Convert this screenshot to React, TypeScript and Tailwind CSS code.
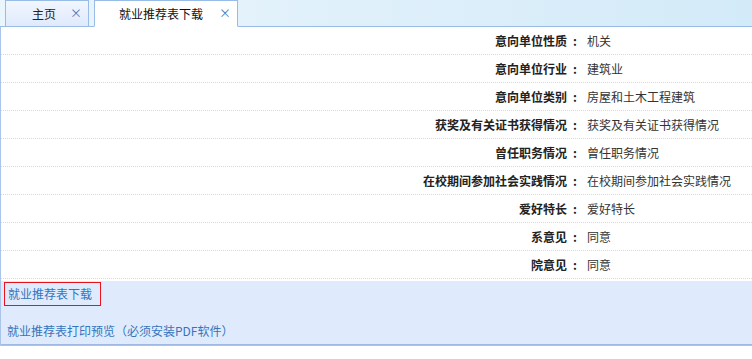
import React from 'react';

const rows: [string, string][] = [
  ['意向单位性质', '机关'],
  ['意向单位行业', '建筑业'],
  ['意向单位类别', '房屋和土木工程建筑'],
  ['获奖及有关证书获得情况', '获奖及有关证书获得情况'],
  ['曾任职务情况', '曾任职务情况'],
  ['在校期间参加社会实践情况', '在校期间参加社会实践情况'],
  ['爱好特长', '爱好特长'],
  ['系意见', '同意'],
  ['院意见', '同意'],
];

const font = { fontFamily: '"Noto Sans CJK SC", "Noto Sans", sans-serif' };

export default function App() {
  return (
    <div className="w-[752px] h-[359px] bg-white overflow-hidden text-[12px]" style={font}>
      {/* tab strip */}
      <div className="flex items-end h-[27px] pl-[5px] gap-[5px] bg-gradient-to-r from-[#eaf5fc] to-[#d3eaf8] border-b border-[#99bbe8]">
        <div className="relative flex items-center h-[27px] w-[84px] -mb-px border border-[#99bbe8] bg-gradient-to-b from-[#f1f6fe] to-[#dfeafb] text-[#222]">
          <span className="ml-[26px]">主页</span>
          <span className="absolute right-[6px] top-[3px] text-[#4a78c2] text-[12px]">×</span>
        </div>
        <div className="relative flex items-center h-[27px] w-[144px] -mb-px border border-[#99bbe8] border-b-white bg-white text-[#111]">
          <span className="ml-[24px]">就业推荐表下载</span>
          <span className="absolute right-[6px] top-[3px] text-[#4a78c2] text-[12px]">×</span>
        </div>
      </div>

      {/* form body */}
      <div className="border-l border-[#a9c5ea] border-b">
        {rows.map(([label, value]) => (
          <div key={label} className="flex items-center h-[28px] border-b border-dotted border-[#c6def3]">
            <div className="w-[582px] text-right font-bold text-[#222]">
              {label}
              <span className="inline-block w-[16px] text-center">:</span>
            </div>
            <div className="pl-[4px] text-[#333]">{value}</div>
          </div>
        ))}
        <div className="h-[2px]" />
        <div className="bg-[#dfebfd] h-[64px] border-b border-[#9fb9e6] pt-[1px]">
          <div className="ml-[3px] w-[97px] h-[24px] border border-[#e8141c] flex items-center pl-[3px]">
            <span className="text-[#3475bc]">就业推荐表下载</span>
          </div>
          <div className="ml-[6px] mt-[16px] text-[#3475bc]">就业推荐表打印预览（必须安装PDF软件）</div>
        </div>
      </div>
    </div>
  );
}
